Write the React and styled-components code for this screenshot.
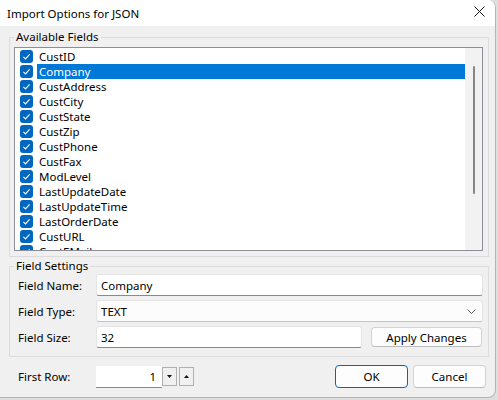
import React from 'react';
import styled, { createGlobalStyle } from 'styled-components';

const GlobalStyle = createGlobalStyle`
  html, body {
    margin: 0;
    padding: 0;
    background: #dedede;
  }
  body {
    font-family: "Noto Sans", "Liberation Sans", sans-serif;
    font-size: 11.5px;
    color: #000;
  }
  * {
    box-sizing: border-box;
  }
`;

const fields = [
    'CustID',
    'Company',
    'CustAddress',
    'CustCity',
    'CustState',
    'CustZip',
    'CustPhone',
    'CustFax',
    'ModLevel',
    'LastUpdateDate',
    'LastUpdateTime',
    'LastOrderDate',
    'CustURL',
    'CustEMail',
];

function CheckIcon() {
    return (
        <svg width="13" height="13" viewBox="0 0 13 13">
            <rect x="0" y="0" width="13" height="13" rx="3" fill="#0067c0" />
            <path d="M3.4 6.9 L5.5 8.9 L9.6 4.4" fill="none" stroke="#fff" strokeWidth="1.1" />
        </svg>
    );
}

function App() {
    return (
        <>
            <GlobalStyle />
            <Window>
                <TitleBar>
                    <Title>Import Options for JSON</Title>
                    <CloseButton>
                        <svg width="11" height="11" viewBox="0 0 11 11">
                            <path d="M0.5 0.5 L10.5 10.5 M10.5 0.5 L0.5 10.5" stroke="#111" strokeWidth="1" />
                        </svg>
                    </CloseButton>
                </TitleBar>

                <Group $mt={3}>
                    <Legend>Available Fields</Legend>
                    <ListBox>
                        <Items>
                            {fields.map((name) => (
                                <Item key={name}>
                                    <CheckIcon />
                                    <ItemText $selected={name === 'Company'}>{name}</ItemText>
                                </Item>
                            ))}
                        </Items>
                        <ScrollTrack>
                            <Thumb />
                        </ScrollTrack>
                    </ListBox>
                </Group>

                <Group $mt={1}>
                    <Legend>Field Settings</Legend>
                    <Settings>
                        <FormRow>
                            <Label>Field Name:</Label>
                            <TextBox>Company</TextBox>
                        </FormRow>
                        <FormRow>
                            <Label>Field Type:</Label>
                            <SelectBox>
                                <span>TEXT</span>
                                <svg width="9" height="5" viewBox="0 0 9 5">
                                    <path d="M0.5 0.5 L4.5 4.5 L8.5 0.5" fill="none" stroke="#5a5a5a" strokeWidth="1" />
                                </svg>
                            </SelectBox>
                        </FormRow>
                        <FormRow>
                            <Label>Field Size:</Label>
                            <TextBox $width="266px">32</TextBox>
                            <Button $push $width="111px" $height="20px">Apply Changes</Button>
                        </FormRow>
                    </Settings>
                </Group>

                <Footer>
                    <Label>First Row:</Label>
                    <SpinBox>1</SpinBox>
                    <SpinButtons>
                        <SpinButton>
                            <svg width="5" height="3" viewBox="0 0 5 3">
                                <path d="M0 0 L5 0 L2.5 3 Z" fill="#111" />
                            </svg>
                        </SpinButton>
                        <SpinButton>
                            <svg width="5" height="3" viewBox="0 0 5 3">
                                <path d="M0 3 L5 3 L2.5 0 Z" fill="#111" />
                            </svg>
                        </SpinButton>
                    </SpinButtons>
                    <Buttons>
                        <Button $primary $width="73px" $height="23px">OK</Button>
                        <Button $width="73px" $height="23px">Cancel</Button>
                    </Buttons>
                </Footer>
            </Window>
        </>
    );
}

const Window = styled.div`
    width: 496px;
    height: 398px;
    background: #f0f0f0;
    border-right: 1px solid #b4b4b4;
    border-bottom: 1px solid #b4b4b4;
    border-top-right-radius: 8px;
    border-bottom-right-radius: 8px;
    overflow: hidden;
    display: flex;
    flex-direction: column;
`;

const TitleBar = styled.div`
    height: 26px;
    background: #fff;
    display: flex;
    align-items: center;
    justify-content: space-between;
    padding-left: 7px;
    flex-shrink: 0;
`;

const Title = styled.span`
    line-height: 16px;
    margin-top: 1px;
`;

const CloseButton = styled.div`
    display: flex;
    align-items: center;
    margin-right: 10px;
    margin-bottom: 4px;
`;

const Group = styled.fieldset`
    margin: ${(p) => p.$mt}px 6px 0 9px;
    padding: 0;
    border: 1px solid #dcdcdc;
    min-width: 0;
`;

const Legend = styled.legend`
    margin-left: 4px;
    padding: 0 2px;
    line-height: 16px;
`;

const ListBox = styled.div`
    margin: 2px 5px 5px 4px;
    height: 204px;
    border: 1px solid #8c8f96;
    background: #fff;
    display: flex;
    overflow: hidden;
`;

const Items = styled.div`
    flex: 1;
    padding-top: 1px;
    overflow: hidden;
`;

const Item = styled.div`
    height: 15px;
    display: flex;
    align-items: center;
    padding-left: 5px;

    svg {
        flex-shrink: 0;
        margin-right: 4px;
    }
`;

const ItemText = styled.span`
    flex: 1;
    height: 15px;
    line-height: 15px;
    padding: 0 2px;
    white-space: nowrap;
    background: ${(p) => (p.$selected ? '#0078d7' : 'transparent')};
    color: ${(p) => (p.$selected ? '#fff' : '#000')};
`;

const ScrollTrack = styled.div`
    width: 17px;
    background: #f2f2f2;
    display: flex;
    flex-direction: column;
    align-items: center;
`;

const Thumb = styled.div`
    width: 2px;
    height: 128px;
    margin-top: 18px;
    margin-left: 1px;
    border-radius: 1px;
    background: #858585;
`;

const Settings = styled.div`
    display: flex;
    flex-direction: column;
    gap: 4px;
    padding: 0 5px 8px 8px;
`;

const FormRow = styled.div`
    display: flex;
    align-items: center;
`;

const Label = styled.span`
    width: 78px;
    flex-shrink: 0;
`;

const inputBase = `
    height: 22px;
    background: #fff;
    border: 1px solid #e4e4e4;
    border-bottom: 1px solid #8a8a8a;
    border-radius: 3px;
    display: flex;
    align-items: center;
    padding: 0 4px;
`;

const TextBox = styled.div`
    ${inputBase}
    width: ${(p) => p.$width || 'auto'};
    flex: ${(p) => (p.$width ? 'none' : '1')};
`;

const SelectBox = styled.div`
    ${inputBase}
    flex: 1;
    background: #fcfcfc;
    border-bottom-color: #c4c4c4;
    justify-content: space-between;
    padding-right: 6px;
`;

const Button = styled.div`
    width: ${(p) => p.$width};
    height: ${(p) => p.$height};
    margin-left: ${(p) => (p.$push ? 'auto' : '0')};
    margin-right: ${(p) => (p.$push ? '1px' : '0')};
    display: flex;
    align-items: center;
    justify-content: center;
    background: #fdfdfd;
    border: 1px solid ${(p) => (p.$primary ? '#0067c0' : '#d3d3d3')};
    border-bottom-color: ${(p) => (p.$primary ? '#0067c0' : '#bcbcbc')};
    border-radius: 4px;
    flex-shrink: 0;
`;

const Footer = styled.div`
    display: flex;
    align-items: center;
    margin-top: 8px;
    padding-left: 18px;
    padding-right: 9px;
`;

const SpinBox = styled.div`
    width: 66px;
    height: 22px;
    background: #fff;
    border-bottom: 1px solid #8a8a8a;
    display: flex;
    align-items: center;
    justify-content: flex-end;
    padding-right: 6px;
`;

const SpinButtons = styled.div`
    display: flex;
    gap: 2px;
`;

const SpinButton = styled.div`
    width: 15px;
    height: 19px;
    background: #f0f0f0;
    border: 1px solid #b0b0b0;
    display: flex;
    align-items: center;
    justify-content: center;
`;

const Buttons = styled.div`
    margin-left: auto;
    display: flex;
    gap: 5px;
`;

export default App;
